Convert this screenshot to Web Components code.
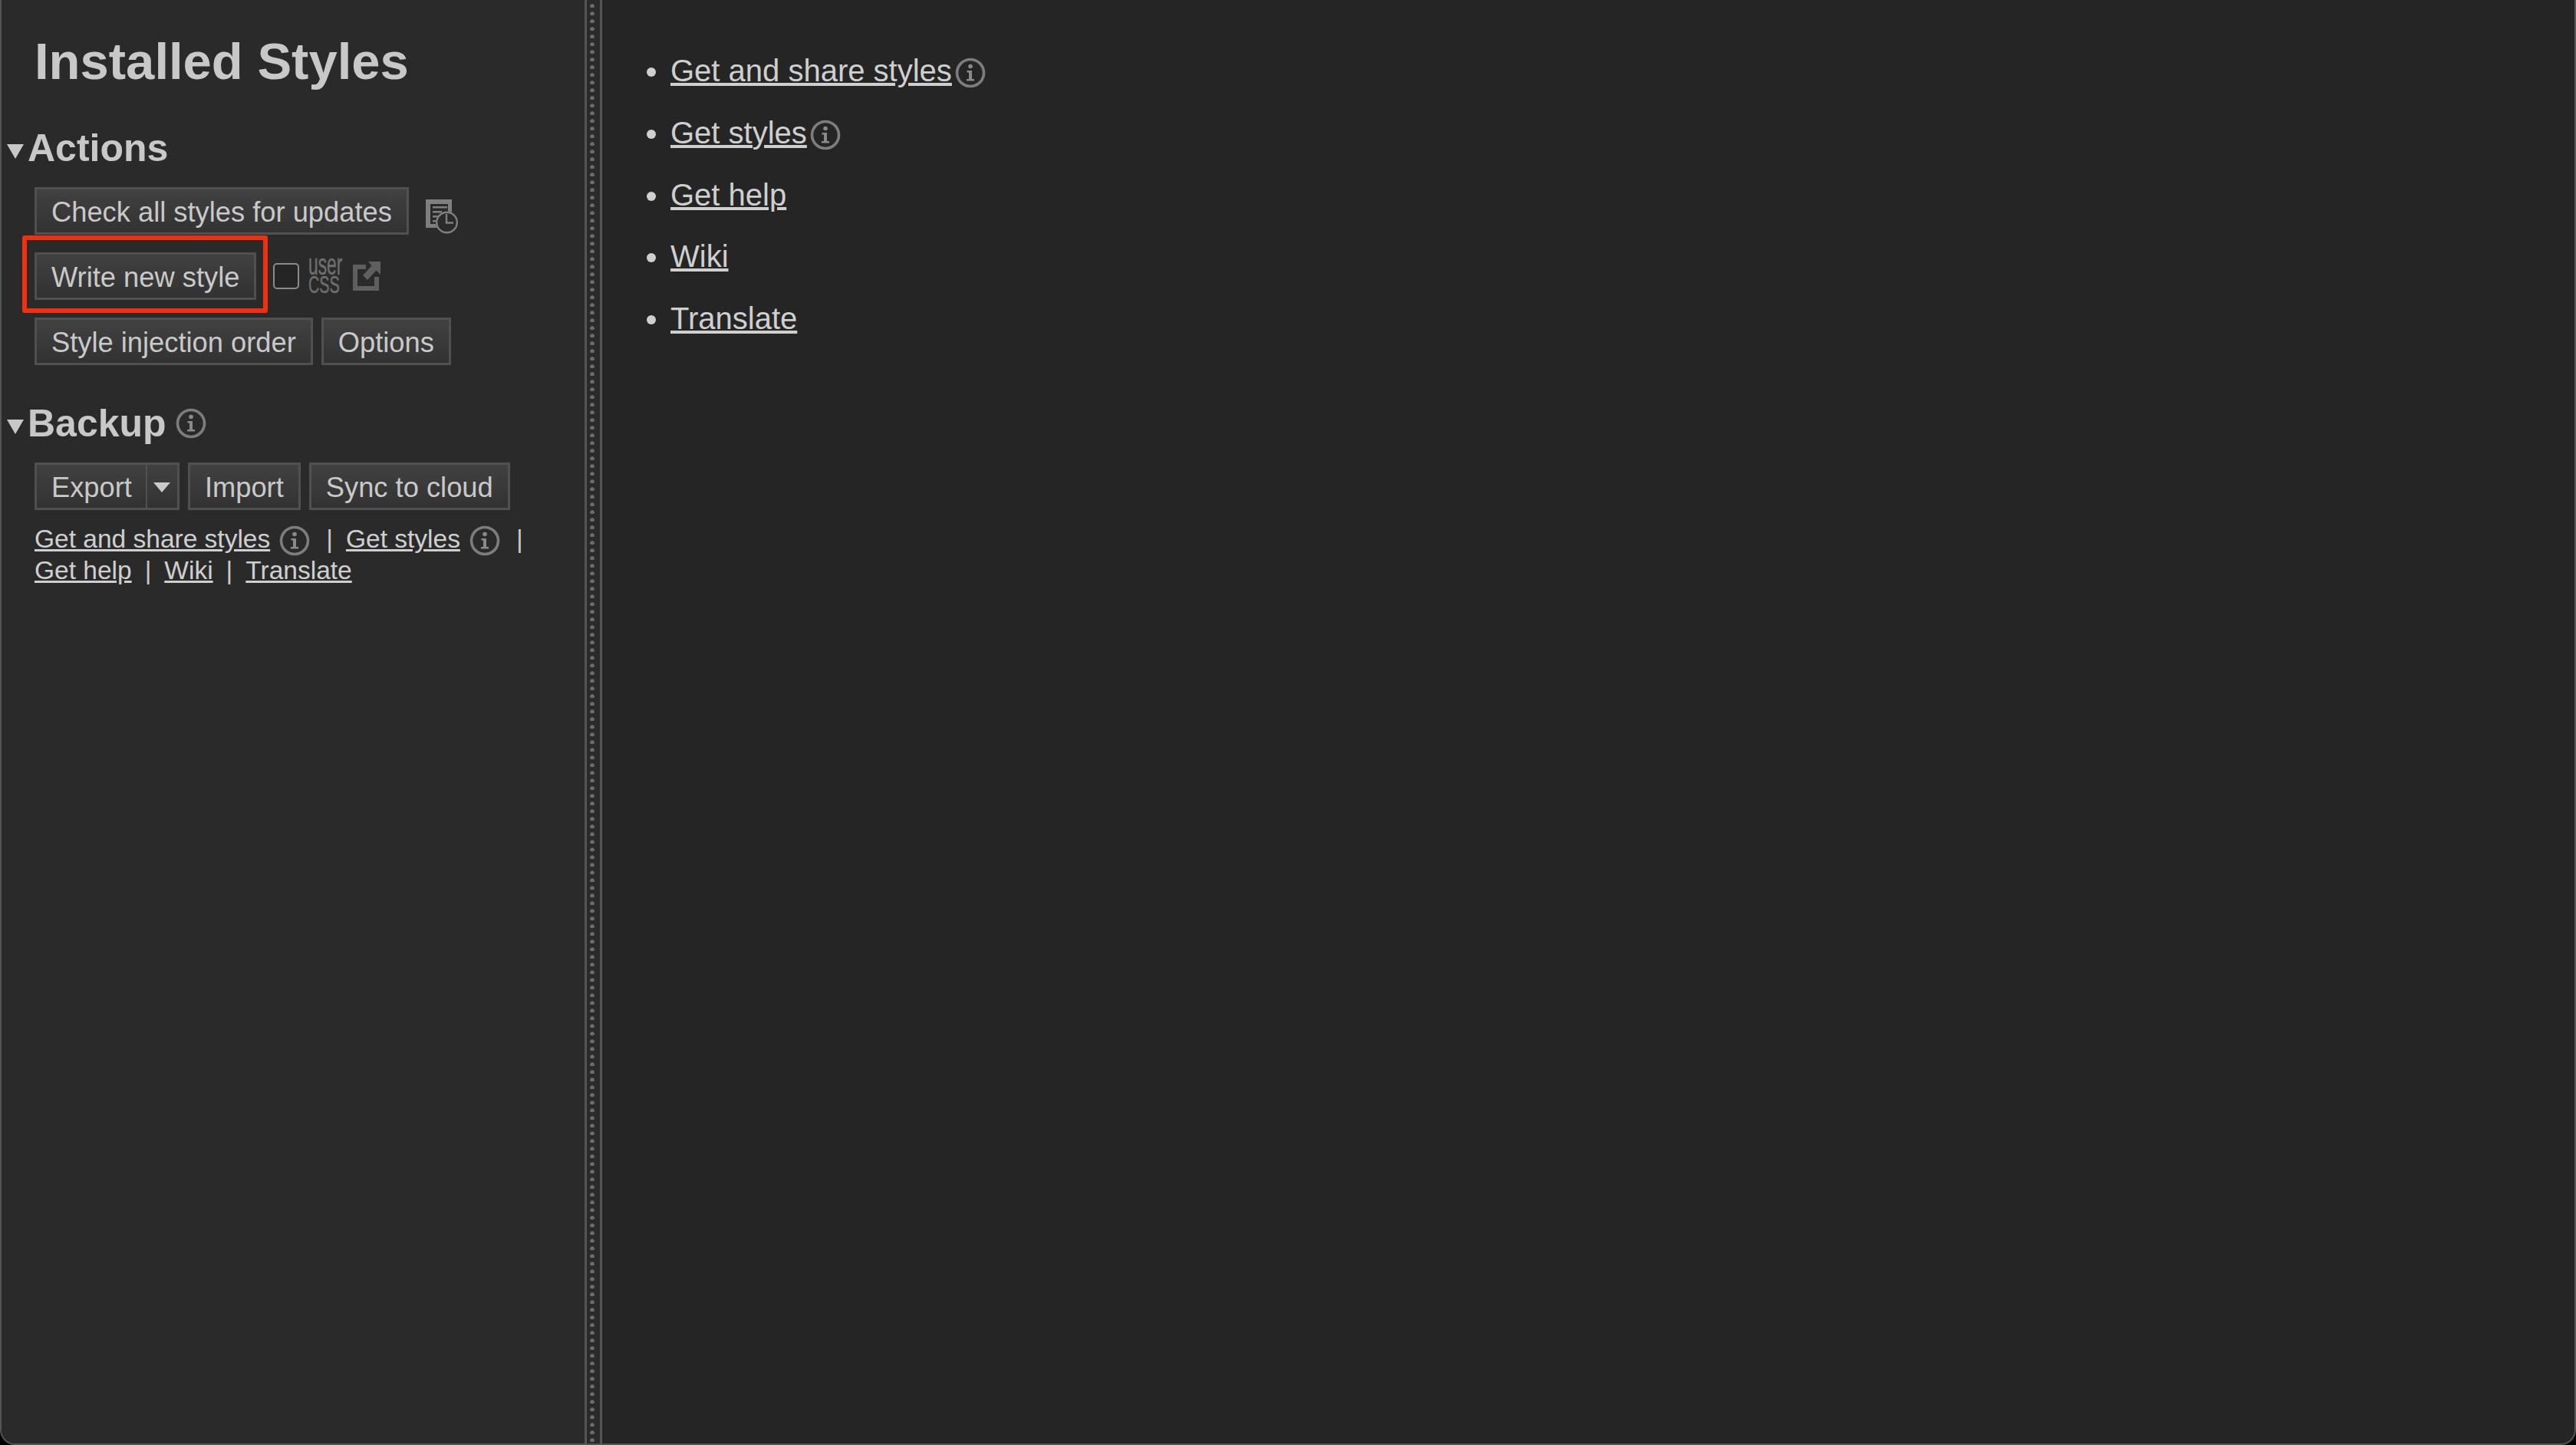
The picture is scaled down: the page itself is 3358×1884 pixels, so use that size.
<!DOCTYPE html>
<html>
<head>
<meta charset="utf-8">
<title>Installed Styles</title>
<style>
    html, body { margin: 0; height: 100%; background: #000; }
    body { font-family: "Liberation Sans", Arial, sans-serif; color: #ccc; overflow: hidden; }
    .sep { margin: 0 17px; }
    link-line svg-icon { margin: -6px 0 -6px 12px; }
</style>
</head>
<body>
<manager-page>
    <side-panel slot="side">
        <h-title slot="title">Installed Styles</h-title>

        <fold-section heading="Actions">
            <btn-row>
                <flat-button>Check all styles for updates</flat-button>
                <svg-icon name="schedule" style="margin-left:11px;margin-top:14px"></svg-icon>
            </btn-row>
            <btn-row class="new">
                <flat-button>Write new style</flat-button>
                <usercss-option></usercss-option>
                <red-marker></red-marker>
            </btn-row>
            <btn-row>
                <flat-button>Style injection order</flat-button>
                <flat-button>Options</flat-button>
            </btn-row>
        </fold-section>

        <fold-section heading="Backup" info>
            <btn-row style="margin-bottom:0">
                <split-button>Export</split-button>
                <flat-button>Import</flat-button>
                <flat-button>Sync to cloud</flat-button>
            </btn-row>
            <link-line>
                <u-link>Get and share styles</u-link><svg-icon name="info"></svg-icon><span class="sep" style="margin-left:21px">|</span><u-link>Get styles</u-link><svg-icon name="info"></svg-icon><span class="sep" style="margin-left:21px">|</span>
                <u-link>Get help</u-link><span class="sep">|</span><u-link>Wiki</u-link><span class="sep">|</span><u-link>Translate</u-link>
            </link-line>
        </fold-section>
    </side-panel>

    <help-list slot="main">
        <help-item><u-link>Get and share styles</u-link><svg-icon name="info" style="margin-left:4px"></svg-icon></help-item>
        <help-item><u-link>Get styles</u-link><svg-icon name="info" style="margin-left:4px"></svg-icon></help-item>
        <help-item><u-link>Get help</u-link></help-item>
        <help-item><u-link>Wiki</u-link></help-item>
        <help-item><u-link>Translate</u-link></help-item>
    </help-list>
</manager-page>

<script>
const ICONS = {
    info: `<svg width="40" height="40" viewBox="0 0 40 40" fill="none">
        <circle cx="20" cy="20" r="17.5" stroke="#7d7d7d" stroke-width="3.6"/>
        <circle cx="20" cy="11.5" r="2.8" fill="#8a8a8a"/>
        <path d="M15.5 17h6.5v11h3v2.6h-10V28h3v-8.400h-2.500z" fill="#8a8a8a"/>
    </svg>`,
    schedule: `<svg width="42" height="45" viewBox="0 0 42 45" fill="none">
        <path d="M0 0h34v37H0z" fill="#7f7f7f"/>
        <path d="M6 6h23v26H6z" fill="#2a2a2a"/>
        <path d="M9 9h19v2.500H9zM9 15h12v2.500H9zM9 21h9v2.500H9zM9 27h6v2.500H9z" fill="#7f7f7f"/>
        <circle cx="27.500" cy="30" r="14.500" fill="#2a2a2a"/>
        <circle cx="27.500" cy="30" r="13.300" stroke="#7f7f7f" stroke-width="2.400"/>
        <path d="M27 19v11.500h9" stroke="#7f7f7f" stroke-width="2.400"/>
    </svg>`,
    external: `<svg width="36" height="38" viewBox="0 0 36 38" fill="none">
        <path d="M0 4h17v6H6v22h22v-12h6v18H0z" fill="#5f5f5f"/>
        <path d="M20 0h16v17l-5.500-5.500L19 24l-6-6 11.500-12.500z" fill="#5f5f5f"/>
    </svg>`
}

class SvgIcon extends HTMLElement {
    constructor() {
        super()
        this.attachShadow({ mode: 'open' })
    }
    connectedCallback() {
        this.shadowRoot.innerHTML = `
            <style>
                :host { display: inline-block; line-height: 0; vertical-align: middle; }
            </style>
            ${ICONS[this.getAttribute('name')]}
        `
    }
}

class ManagerPage extends HTMLElement {
    constructor() {
        super()
        this.attachShadow({ mode: 'open' })
        this.shadowRoot.innerHTML = `
            <style>
                :host {
                    display: flex;
                    box-sizing: border-box;
                    height: 100vh;
                    background: #252525;
                    border: 2px solid #555;
                    border-top: none;
                    border-radius: 0 0 20px 20px;
                    overflow: hidden;
                }
                .side { width: 760px; flex: none; background: #2a2a2a; }
                .divider {
                    flex: none;
                    box-sizing: border-box;
                    width: 23px;
                    background-color: #2a2a2a;
                    background-image: radial-gradient(circle at 7px 8px, #6c6c6c 2.400px, transparent 3.200px);
                    background-size: 100% 10px;
                    border-left: 3px solid #555;
                    border-right: 3px solid #555;
                }
                .main { flex: 1; min-width: 0; }
            </style>
            <div class="side"><slot name="side"></slot></div>
            <div class="divider"></div>
            <div class="main"><slot name="main"></slot></div>
        `
    }
}

class SidePanel extends HTMLElement {
    constructor() {
        super()
        this.attachShadow({ mode: 'open' })
        this.shadowRoot.innerHTML = `
            <style>
                :host { display: block; padding: 40px 0 0 43px; }
                .head { margin-bottom: 42px; }
            </style>
            <div class="head"><slot name="title"></slot></div>
            <slot></slot>
        `
    }
}

class HTitle extends HTMLElement {
    constructor() {
        super()
        this.attachShadow({ mode: 'open' })
        this.shadowRoot.innerHTML = `
            <style>
                :host { display: block; font-size: 67px; line-height: 80px; font-weight: bold; color: #c8c8c8; }
            </style>
            <slot></slot>
        `
    }
}

class FoldSection extends HTMLElement {
    constructor() {
        super()
        this.attachShadow({ mode: 'open' })
    }
    connectedCallback() {
        const info = this.hasAttribute('info') ? `<svg-icon name="info" style="margin-left:12px"></svg-icon>` : ''
        this.shadowRoot.innerHTML = `
            <style>
                :host { display: block; margin-bottom: 45px; }
                .heading {
                    display: flex;
                    align-items: center;
                    box-sizing: border-box;
                    height: 60px;
                    padding-top: 2px;
                    margin-left: -36px;
                    margin-bottom: 22px;
                    font-size: 50px;
                    font-weight: bold;
                    color: #c8c8c8;
                }
                .arrow {
                    width: 0;
                    height: 0;
                    margin: 8px 5px 0 0;
                    border-left: 11px solid transparent;
                    border-right: 11px solid transparent;
                    border-top: 19px solid #c8c8c8;
                }
                .body { display: block; }
            </style>
            <div class="heading"><span class="arrow"></span><span>${this.getAttribute('heading')}</span>${info}</div>
            <div class="body"><slot></slot></div>
        `
    }
}

class BtnRow extends HTMLElement {
    constructor() {
        super()
        this.attachShadow({ mode: 'open' })
        this.shadowRoot.innerHTML = `
            <style>
                :host {
                    display: flex;
                    align-items: center;
                    position: relative;
                    gap: 11px;
                    margin-bottom: 23px;
                }
                :host(:last-child) { margin-bottom: 0; }
            </style>
            <slot></slot>
        `
    }
}

class FlatButton extends HTMLElement {
    constructor() {
        super()
        this.attachShadow({ mode: 'open' })
        this.shadowRoot.innerHTML = `
            <style>
                :host {
                    display: inline-flex;
                    align-items: center;
                    box-sizing: border-box;
                    height: 62px;
                    padding: 3px 19px 0;
                    font-size: 36.300px;
                    color: #c9c9c9;
                    white-space: nowrap;
                    background: linear-gradient(#414141, #323232);
                    border: 3px solid #505050;
                }
            </style>
            <slot></slot>
        `
    }
}

class SplitButton extends HTMLElement {
    constructor() {
        super()
        this.attachShadow({ mode: 'open' })
        this.shadowRoot.innerHTML = `
            <style>
                :host {
                    display: inline-flex;
                    box-sizing: border-box;
                    height: 62px;
                    font-size: 36.300px;
                    color: #c9c9c9;
                    background: linear-gradient(#414141, #323232);
                    border: 3px solid #505050;
                }
                .label { display: flex; align-items: center; padding: 3px 18px 0 19px; border-right: 2px solid #505050; }
                .drop { display: flex; align-items: center; justify-content: center; width: 39px; }
                .tri {
                    width: 0;
                    height: 0;
                    margin-top: 3px;
                    border-left: 11px solid transparent;
                    border-right: 11px solid transparent;
                    border-top: 13px solid #c9c9c9;
                }
            </style>
            <span class="label"><slot></slot></span>
            <span class="drop"><span class="tri"></span></span>
        `
    }
}

class UsercssOption extends HTMLElement {
    constructor() {
        super()
        this.attachShadow({ mode: 'open' })
        this.shadowRoot.innerHTML = `
            <style>
                :host { display: flex; align-items: center; margin-left: 11px; }
                .box {
                    box-sizing: border-box;
                    width: 34px;
                    height: 34px;
                    border: 2px solid #8a8a8a;
                    border-radius: 5px;
                    background: #252525;
                }
                .word { width: 46px; height: 48px; margin-left: 12px; color: #6e6e6e; -webkit-text-stroke: .5px #6e6e6e; }
                .word span { display: block; height: 24px; white-space: nowrap; transform-origin: 0 0; }
                .user { font-size: 38px; line-height: 24px; transform: translateY(-3px) scaleX(.6); }
                .css { font-size: 31px; line-height: 24px; transform: scaleX(.64); }
            </style>
            <span class="box"></span>
            <div class="word"><span class="user">user</span><span class="css">CSS</span></div>
            <svg-icon name="external" style="margin-left:12px"></svg-icon>
        `
    }
}

// the red frame is an annotation on top of the screenshot, not part of the page flow
class RedMarker extends HTMLElement {
    constructor() {
        super()
        this.attachShadow({ mode: 'open' })
        this.shadowRoot.innerHTML = `
            <style>
                :host {
                    position: absolute;
                    left: -16px;
                    top: -22px;
                    box-sizing: border-box;
                    width: 320px;
                    height: 101px;
                    border: 6px solid #f03010;
                    border-radius: 3px;
                }
            </style>
        `
    }
}

class ULink extends HTMLElement {
    constructor() {
        super()
        this.attachShadow({ mode: 'open' })
        this.shadowRoot.innerHTML = `<style>:host { display: inline; color: #cfcfcf; text-decoration: underline; white-space: nowrap; }</style><slot></slot>`
    }
}

class LinkLine extends HTMLElement {
    constructor() {
        super()
        this.attachShadow({ mode: 'open' })
        this.shadowRoot.innerHTML = `
            <style>
                :host { display: block; width: 690px; margin-top: 17px; font-size: 33.500px; line-height: 41px; color: #c9c9c9; }
            </style>
            <slot></slot>
        `
    }
}

class HelpList extends HTMLElement {
    constructor() {
        super()
        this.attachShadow({ mode: 'open' })
        this.shadowRoot.innerHTML = `
            <style>
                :host { display: block; padding: 52px 0 0 89px; font-size: 40px; line-height: 80.800px; color: #cfcfcf; }
            </style>
            <slot></slot>
        `
    }
}

class HelpItem extends HTMLElement {
    constructor() {
        super()
        this.attachShadow({ mode: 'open' })
        this.shadowRoot.innerHTML = `<style>:host { display: list-item; list-style: disc outside; }</style><slot></slot>`
    }
}

customElements.define('svg-icon', SvgIcon)
customElements.define('manager-page', ManagerPage)
customElements.define('side-panel', SidePanel)
customElements.define('h-title', HTitle)
customElements.define('fold-section', FoldSection)
customElements.define('btn-row', BtnRow)
customElements.define('flat-button', FlatButton)
customElements.define('split-button', SplitButton)
customElements.define('usercss-option', UsercssOption)
customElements.define('red-marker', RedMarker)
customElements.define('u-link', ULink)
customElements.define('link-line', LinkLine)
customElements.define('help-list', HelpList)
customElements.define('help-item', HelpItem)
</script>
</body>
</html>
